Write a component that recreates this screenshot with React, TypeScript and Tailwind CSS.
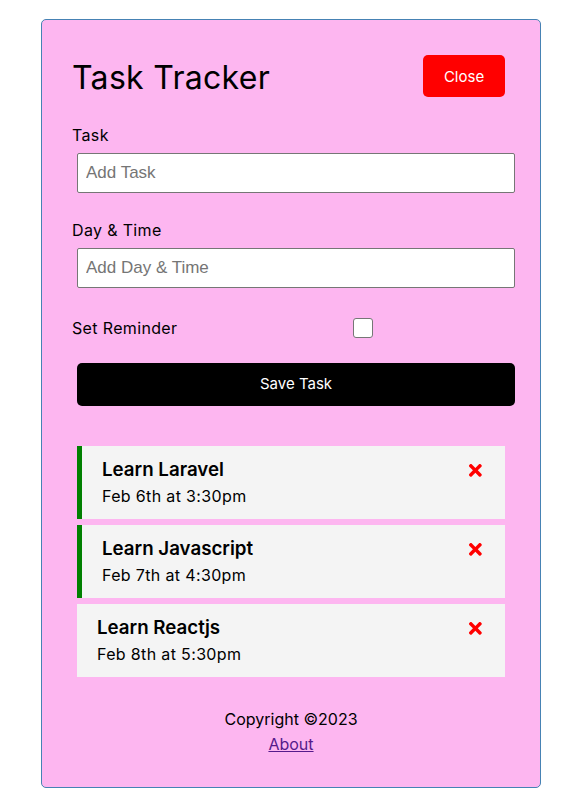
import React from "react";
import { FaTimes } from "react-icons/fa";

const tasks = [
  { id: 1, text: "Learn Laravel", day: "Feb 6th at 3:30pm", reminder: true },
  { id: 2, text: "Learn Javascript", day: "Feb 7th at 4:30pm", reminder: true },
  { id: 3, text: "Learn Reactjs", day: "Feb 8th at 5:30pm", reminder: false },
];

const inputCls =
  "mt-[5px] mb-[4px] ml-[5px] block h-[40px] w-[438px] rounded-[2px] border border-[#767676] bg-white px-[8px] font-['Liberation_Sans',Arial,sans-serif] text-[17px] placeholder:text-[#757575]";

export default function App() {
  return (
    <div className="min-h-[812px] bg-white pt-[19px] font-['Inter','Noto_Sans',sans-serif] text-black">
      <div className="ml-[41px] flex w-[500px] flex-col rounded-[5px] border border-[#4682b4] bg-[#fdb6f0] p-[30px]">
        <header className="flex h-[52px] items-center justify-between">
          <h1 className="pt-[3px] text-[32px] leading-[48px] font-normal tracking-[0.3px]">Task Tracker</h1>
          <button className="m-[5px] h-[42px] w-[82px] rounded-[5px] bg-[#ff0000] pt-[2px] text-[15px] text-white">
            Close
          </button>
        </header>

        <form className="mt-[20px] flex flex-col">
          <div className="flex flex-col">
            <label className="block h-[26px] text-[16px] leading-[26px] tracking-[0.35px]">Task</label>
            <input type="text" placeholder="Add Task" className={inputCls} />
          </div>
          <div className="mt-[20px] flex flex-col">
            <label className="block h-[26px] text-[16px] leading-[26px] tracking-[0.35px]">Day &amp; Time</label>
            <input type="text" placeholder="Add Day & Time" className={inputCls} />
          </div>
          <div className="mt-[21px] flex h-[30px] items-center">
            <label className="w-[281px] text-[16px] leading-[26px] tracking-[0.35px]">Set Reminder</label>
            <input
              type="checkbox"
              className="h-[20px] w-[20px] appearance-none rounded-[3px] border border-[#767676] bg-white"
            />
          </div>
          <button
            type="button"
            className="mt-[20px] ml-[5px] block h-[43px] w-[438px] rounded-[5px] bg-black text-[15px] text-white"
          >
            Save Task
          </button>
        </form>

        <div className="mt-[40px] flex flex-col gap-[6px]">
          {tasks.map((t) => (
            <div
              key={t.id}
              className={`mx-[5px] h-[73px] bg-[#f4f4f4] py-[10px] pr-[20px] ${
                t.reminder ? "border-l-[5px] border-[#008000] pl-[20px]" : "pl-[20px]"
              }`}
            >
              <h3 className="flex h-[28px] items-center justify-between text-[18.72px] leading-[28px] font-semibold">
                {t.text}
                <FaTimes className="text-[#ff0000]" />
              </h3>
              <p className="text-[16px] leading-[25px] tracking-[0.35px]">{t.day}</p>
            </div>
          ))}
        </div>

        <footer className="mt-[30px] text-center text-[16px] leading-[25px]">
          <p>Copyright &copy;2023</p>
          <a href="#about" className="text-[#551a8b] underline">
            About
          </a>
        </footer>
      </div>
    </div>
  );
}
